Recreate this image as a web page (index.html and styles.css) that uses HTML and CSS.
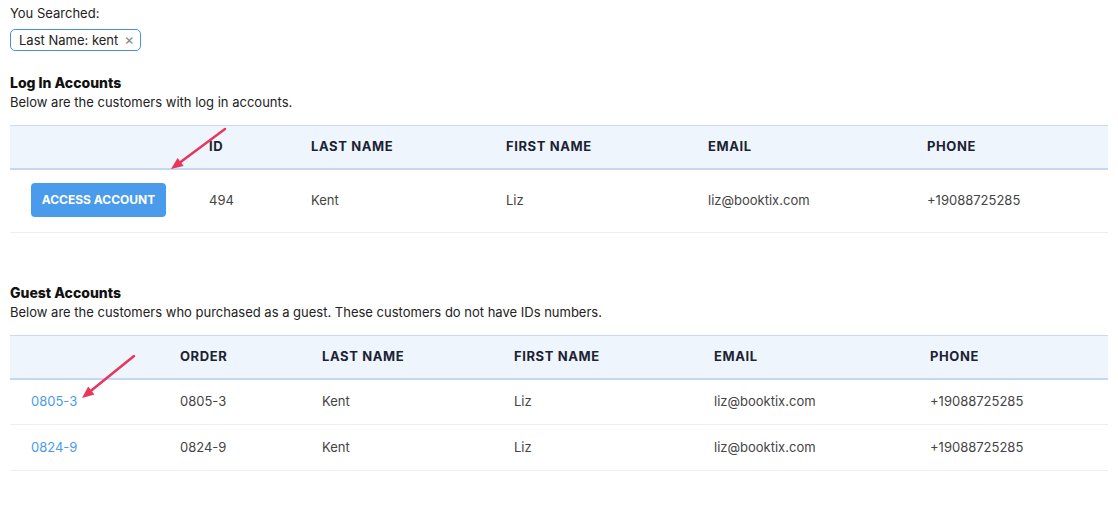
FILE: index.html
```html
<!DOCTYPE html>
<html lang="en">

<head>
  <meta charset="UTF-8" />
  <meta name="viewport" content="width=device-width, initial-scale=1.0" />
  <title>Customer Search</title>
  <link rel="stylesheet" href="styles.css">
</head>

<body>

  <!-- SEARCH SUMMARY -->
  <div class="search-label">You Searched:</div>
  <div class="chips">
    <span class="chip">Last Name: kent <span class="chip-x">&times;</span></span>
  </div>

  <!-- LOG IN ACCOUNTS -->
  <section class="block">
    <h3>Log In Accounts</h3>
    <p class="desc">Below are the customers with log in accounts.</p>
    <div class="table-wrap">
      <table class="list">
        <colgroup>
          <col style="width:178px">
          <col style="width:102px">
          <col style="width:195px">
          <col style="width:202px">
          <col style="width:219px">
          <col>
        </colgroup>
        <thead>
          <tr>
            <th></th>
            <th>ID</th>
            <th>Last Name</th>
            <th>First Name</th>
            <th>Email</th>
            <th>Phone</th>
          </tr>
        </thead>
        <tbody>
          <tr class="tall">
            <td><button class="access-btn">Access Account</button></td>
            <td>494</td>
            <td>Kent</td>
            <td>Liz</td>
            <td>liz@booktix.com</td>
            <td>+19088725285</td>
          </tr>
        </tbody>
      </table>
      <svg class="arrow arrow-1" width="70" height="50" viewBox="0 0 70 50">
        <line x1="60" y1="4" x2="15.6" y2="36.9" stroke="#e8365d" stroke-width="2.5" stroke-linecap="round" />
        <polygon points="6,44 18.6,40.9 12.6,32.9" fill="#e8365d" />
      </svg>
    </div>
  </section>

  <!-- GUEST ACCOUNTS -->
  <section class="block guest">
    <h3>Guest Accounts</h3>
    <p class="desc">Below are the customers who purchased as a guest. These customers do not have IDs numbers.</p>
    <div class="table-wrap">
      <table class="list">
        <colgroup>
          <col style="width:149px">
          <col style="width:142px">
          <col style="width:192px">
          <col style="width:200px">
          <col style="width:216px">
          <col>
        </colgroup>
        <thead>
          <tr>
            <th></th>
            <th>Order</th>
            <th>Last Name</th>
            <th>First Name</th>
            <th>Email</th>
            <th>Phone</th>
          </tr>
        </thead>
        <tbody>
          <tr>
            <td><a href="#" class="order-link">0805-3</a></td>
            <td>0805-3</td>
            <td>Kent</td>
            <td>Liz</td>
            <td>liz@booktix.com</td>
            <td>+19088725285</td>
          </tr>
          <tr>
            <td><a href="#" class="order-link">0824-9</a></td>
            <td>0824-9</td>
            <td>Kent</td>
            <td>Liz</td>
            <td>liz@booktix.com</td>
            <td>+19088725285</td>
          </tr>
        </tbody>
      </table>
      <svg class="arrow arrow-2" width="70" height="50" viewBox="0 0 70 50">
        <line x1="58" y1="5" x2="15.3" y2="39.5" stroke="#e8365d" stroke-width="2.5" stroke-linecap="round" />
        <polygon points="6,47 18.4,43.4 12.2,35.6" fill="#e8365d" />
      </svg>
    </div>
  </section>

</body>

</html>
```

FILE: styles.css
```css
/* Base */
* {
  margin: 0;
  padding: 0;
  box-sizing: border-box;
}

body {
  font-family: 'Inter', 'Noto Sans', sans-serif;
  font-size: 13px;
  color: #222;
  background: #fff;
  padding: 4px 10px 0 10px;
}

/* Search summary */
.search-label {
  line-height: 18px;
  color: #222;
}

.chips {
  margin-top: 7px;
  display: flex;
}

.chip {
  display: inline-flex;
  align-items: center;
  gap: 6px;
  height: 22px;
  padding: 0 6px 0 8px;
  border: 1px solid #4a90e2;
  border-radius: 5px;
  color: #222;
  line-height: 20px;
}

.chip-x {
  color: #888;
  font-size: 15px;
  line-height: 20px;
}

/* Sections */
.block {
  margin-top: 22px;
}

.block.guest {
  margin-top: 50px;
}

.block h3 {
  font-size: 14px;
  font-weight: 800;
  line-height: 20px;
  color: #111;
}

.desc {
  line-height: 18px;
  color: #222;
}

.table-wrap {
  position: relative;
  margin-top: 14px;
}

/* Tables */
.list {
  width: 100%;
  border-collapse: collapse;
  table-layout: fixed;
}

.list th {
  height: 43px;
  background: #eff5fd;
  border-top: 1px solid #c9dbf1;
  border-bottom: 2px solid #c6d8f0;
  text-align: left;
  padding: 0 0 1px 21px;
  font-size: 13px;
  font-weight: 700;
  letter-spacing: 0.6px;
  text-transform: uppercase;
  color: #1b2333;
}

.list td {
  height: 46px;
  padding: 0 0 2px 21px;
  border-bottom: 1px solid #eeeeee;
  color: #444;
  vertical-align: middle;
}

.list tr.tall td {
  height: 64px;
}

.access-btn {
  height: 34px;
  width: 135px;
  border: none;
  border-radius: 4px;
  background: #4a9bec;
  color: #fff;
  font-family: inherit;
  font-size: 12px;
  font-weight: 700;
  text-transform: uppercase;
  cursor: pointer;
}

.order-link {
  color: #4a9bec;
  text-decoration: none;
}

/* Annotation arrows */
.arrow {
  position: absolute;
  pointer-events: none;
}

.arrow-1 {
  left: 155px;
  top: 0;
}

.arrow-2 {
  left: 66px;
  top: 16px;
}
```
